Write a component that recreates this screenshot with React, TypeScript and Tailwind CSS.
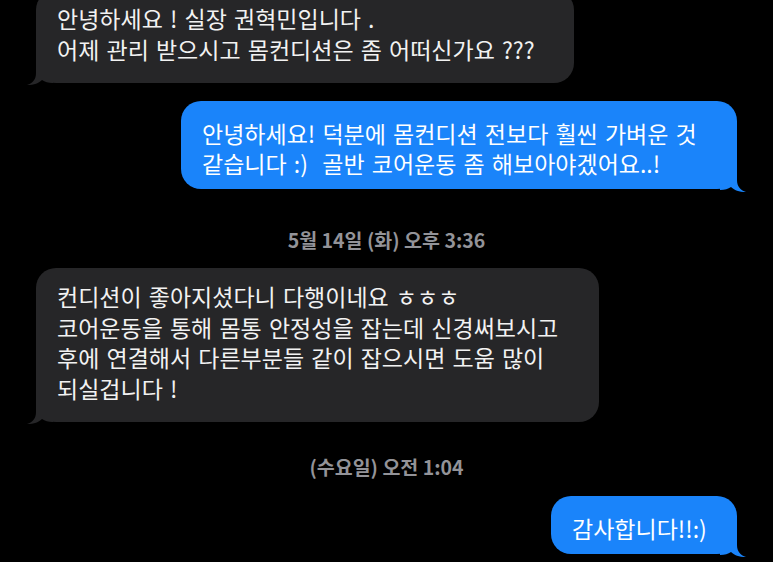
import React from "react";

type BubbleProps = {
  side: "left" | "right";
  lines: string[];
  className?: string;
};

function Tail({ side, color }: { side: "left" | "right"; color: string }) {
  return (
    <svg
      width="26"
      height="24"
      viewBox="0 0 26 24"
      className={
        side === "left"
          ? "absolute left-[-9px] bottom-[-2px]"
          : "absolute right-[-9px] bottom-[-3px] -scale-x-100"
      }
    >
      <path
        d="M9 0 L9 12 C9 18 6 22 0 24 C7 24 12 22 15 19 C18 21 21 22 26 22 L26 0 Z"
        fill={color}
      />
    </svg>
  );
}

function Bubble({ side, lines, className }: BubbleProps) {
  const left = side === "left";
  return (
    <div
      className={`relative rounded-[20px] px-[21px] text-[23px] [word-spacing:2px] whitespace-pre ${
        left
          ? "bg-[#262628] text-[#f2f2f2] pt-[13px] pb-[19px] leading-[30.5px]"
          : "bg-[#1a84fa] text-white pt-[17px] pb-[11px] leading-[30px]"
      } ${className ?? ""}`}
    >
      <Tail side={side} color={left ? "#262628" : "#1a84fa"} />
      <div className="relative">
        {lines.map((l, i) => (
          <div key={i}>{l}</div>
        ))}
      </div>
    </div>
  );
}

function Stamp({ text, className }: { text: string; className?: string }) {
  return (
    <div
      className={`text-center text-[19.5px] leading-[24px] font-semibold text-[#939398] ${className ?? ""}`}
    >
      {text}
    </div>
  );
}

export default function App() {
  return (
    <div className="w-[773px] h-[562px] overflow-hidden bg-black font-['Noto_Sans_CJK_KR',sans-serif]">
      <div className="flex flex-col mt-[-10px]">
        <Bubble
          side="left"
          className="ml-[36px] w-[538px]"
          lines={[
            "안녕하세요 ! 실장 권혁민입니다 .",
            "어제 관리 받으시고 몸컨디션은 좀 어떠신가요 ???",
          ]}
        />
        <Bubble
          side="right"
          className="ml-auto mr-[36px] mt-[18px] w-[556px]"
          lines={[
            "안녕하세요! 덕분에 몸컨디션 전보다 훨씬 가벼운 것",
            "같습니다 :)  골반 코어운동 좀 해보아야겠어요..!",
          ]}
        />
        <Stamp text="5월 14일 (화) 오후 3:36" className="mt-[39px]" />
        <Bubble
          side="left"
          className="ml-[36px] mt-[16px] w-[563px]"
          lines={[
            "컨디션이 좋아지셨다니 다행이네요 ㅎㅎㅎ",
            "코어운동을 통해 몸통 안정성을 잡는데 신경써보시고",
            "후에 연결해서 다른부분들 같이 잡으시면 도움 많이",
            "되실겁니다 !",
          ]}
        />
        <Stamp text="(수요일) 오전 1:04" className="mt-[33px]" />
        <Bubble
          side="right"
          className="ml-auto mr-[36px] mt-[17px] w-[186px]"
          lines={["감사합니다!!:)"]}
        />
      </div>
    </div>
  );
}
